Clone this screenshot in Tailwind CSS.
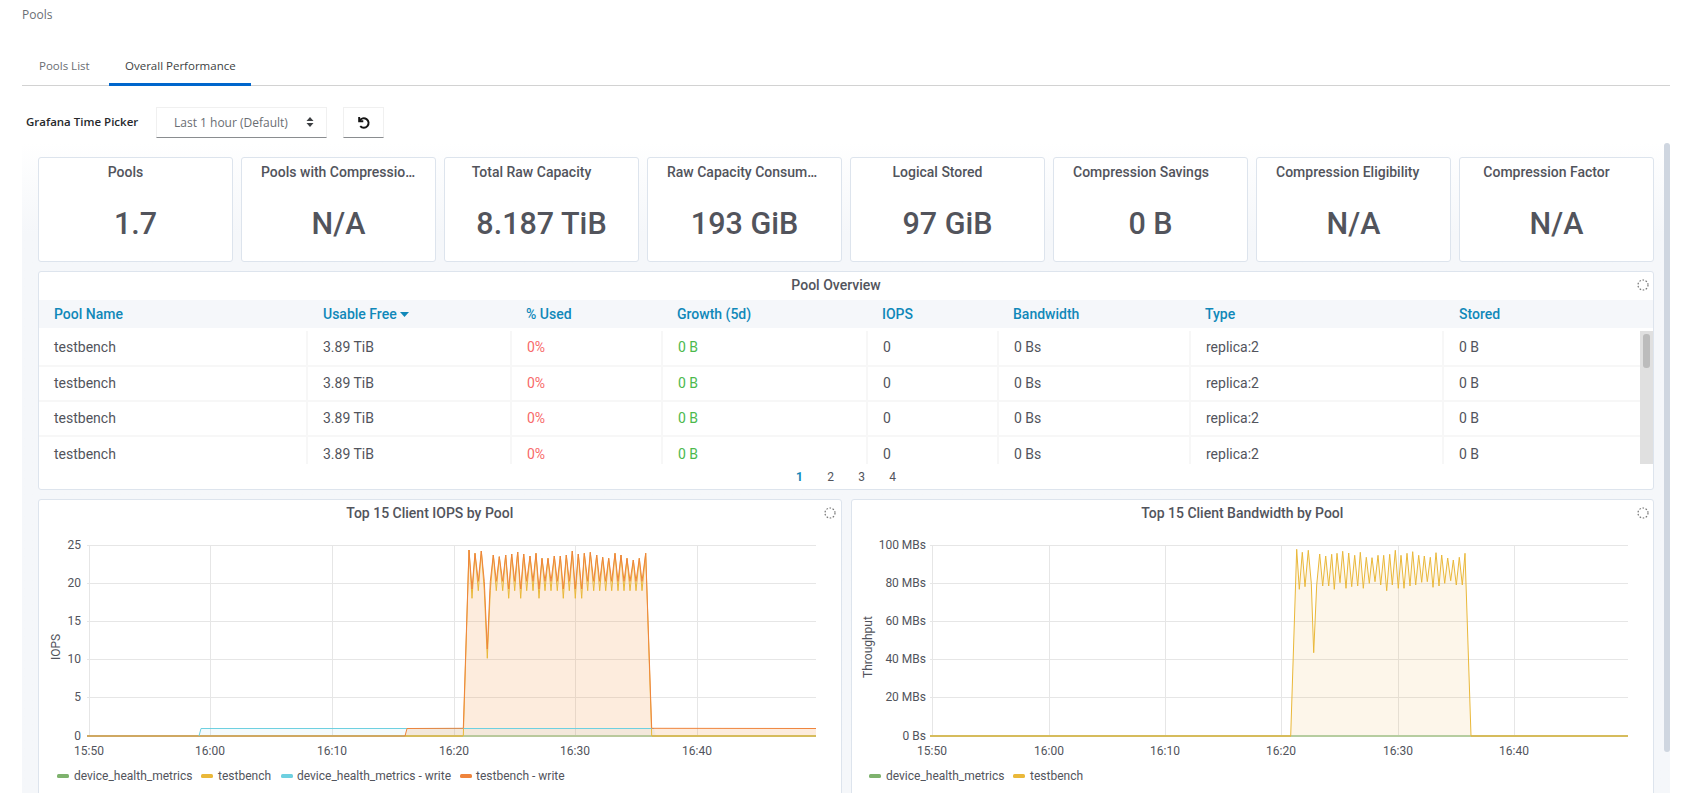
<!DOCTYPE html>
<html lang="en">
<head>
  <meta charset="UTF-8" />
  <meta name="viewport" content="width=device-width, initial-scale=1" />
  <title>Pools</title>
  <script src="https://cdn.jsdelivr.net/npm/@tailwindcss/browser@4"></script>
</head>
<body class="h-[793px] overflow-hidden bg-white font-['Open_Sans',sans-serif] text-xs">
  <main class="pl-[22px] pr-[24px]">
    <p class="h-[30px] leading-[30px] text-[#6a6e73]">Pools</p>

    <!-- tabs -->
    <div class="mt-[26px] flex h-[30px] items-start border-b border-[#d2d2d2] text-[11.5px]">
      <a class="h-[30px] w-[87px] pl-[17px] leading-[20px] text-[#6a6e73]">Pools List</a>
      <a class="h-[30px] w-[142px] border-b-[3px] border-[#06c] pl-[16px] leading-[20px] text-[#3c3f42]">Overall Performance</a>
    </div>

    <!-- time picker -->
    <div class="mt-[21px] flex h-[30px] items-center pl-[4px]">
      <span class="w-[130px] text-[11.5px] font-semibold text-[#26282b]">Grafana Time Picker</span>
      <div class="flex h-[31px] w-[171px] items-center justify-between border border-[#f0f0f0] border-b-[#8a8d90] pl-[17px] pr-[12px] text-[#6a6e73]">
        <span class="pt-[2px]">Last 1 hour (Default)</span>
        <svg width="8" height="12" viewBox="0 0 8 12"><path d="M4 1L7.5 5H.5zM4 11L.5 7h7z" fill="#3c3f42"/></svg>
      </div>
      <button class="ml-[16px] flex h-[31px] w-[41px] items-center justify-center border border-[#f0f0f0] border-b-[#8a8d90]">
        <svg width="13" height="13" viewBox="0 0 12 12" fill="none" stroke="#151515" stroke-width="1.8"><path d="M2 1v3.8h3.8"/><path d="M2.4 4.4A4.4 4.4 0 1 1 3 9.4"/></svg>
      </button>
    </div>

    <!-- grafana frame -->
    <section class="relative mt-[6px] h-[650px] overflow-hidden bg-linear-to-b from-white to-[#f5f7fa] to-[14%] pl-[16px] pt-[14px] font-['Roboto',sans-serif] text-sm text-[#52545c]">
      <div class="absolute right-0 top-0 h-[609px] w-[6px] rounded-[3px] bg-[#cfd6e0]"></div>

      <div class="w-[1616px]">
        <!-- stat cards -->
        <div class="grid grid-cols-8 gap-[8px]">
          <div class="h-[105px] rounded-[3px] border border-[#dde4ed] bg-white text-center">
            <div class="truncate px-[19px] pt-[4px] leading-[20px] font-medium"><span class="pr-5">Pools</span></div>
            <div class="mt-[22px] text-[30.5px] leading-[40px] font-medium">1.7</div>
          </div>
          <div class="h-[105px] rounded-[3px] border border-[#dde4ed] bg-white text-center">
            <div class="truncate px-[19px] pt-[4px] leading-[20px] font-medium">Pools with Compression Eligibility</div>
            <div class="mt-[22px] text-[30.5px] leading-[40px] font-medium">N/A</div>
          </div>
          <div class="h-[105px] rounded-[3px] border border-[#dde4ed] bg-white text-center">
            <div class="truncate px-[19px] pt-[4px] leading-[20px] font-medium"><span class="pr-5">Total Raw Capacity</span></div>
            <div class="mt-[22px] text-[30.5px] leading-[40px] font-medium">8.187 TiB</div>
          </div>
          <div class="h-[105px] rounded-[3px] border border-[#dde4ed] bg-white text-center">
            <div class="truncate px-[19px] pt-[4px] leading-[20px] font-medium">Raw Capacity Consumed</div>
            <div class="mt-[22px] text-[30.5px] leading-[40px] font-medium">193 GiB</div>
          </div>
          <div class="h-[105px] rounded-[3px] border border-[#dde4ed] bg-white text-center">
            <div class="truncate px-[19px] pt-[4px] leading-[20px] font-medium"><span class="pr-5">Logical Stored</span></div>
            <div class="mt-[22px] text-[30.5px] leading-[40px] font-medium">97 GiB</div>
          </div>
          <div class="h-[105px] rounded-[3px] border border-[#dde4ed] bg-white text-center">
            <div class="px-[19px] pt-[4px] text-left leading-[20px] font-medium whitespace-nowrap">Compression Savings</div>
            <div class="mt-[22px] text-[30.5px] leading-[40px] font-medium">0 B</div>
          </div>
          <div class="h-[105px] rounded-[3px] border border-[#dde4ed] bg-white text-center">
            <div class="px-[19px] pt-[4px] text-left leading-[20px] font-medium whitespace-nowrap">Compression Eligibility</div>
            <div class="mt-[22px] text-[30.5px] leading-[40px] font-medium">N/A</div>
          </div>
          <div class="h-[105px] rounded-[3px] border border-[#dde4ed] bg-white text-center">
            <div class="truncate px-[19px] pt-[4px] leading-[20px] font-medium"><span class="pr-5">Compression Factor</span></div>
            <div class="mt-[22px] text-[30.5px] leading-[40px] font-medium">N/A</div>
          </div>
        </div>

        <!-- pool overview -->
        <div class="relative mt-[9px] h-[219px] rounded-[3px] border border-[#dde4ed] bg-white">
          <div class="h-[28px] pr-5 text-center leading-[27px] font-medium">Pool Overview</div>
          <svg class="absolute right-[4px] top-[7px]" width="12" height="12" viewBox="0 0 12 12" fill="none" stroke="#777" stroke-width="1.2" stroke-dasharray="1.6 1.6"><circle cx="6" cy="6" r="5"/></svg>

          <div class="grid h-[28px] grid-cols-[269px_204px_151px_205px_131px_192px_253px_1fr] items-center bg-[#f5f7fa] font-medium text-[#1088b9]">
            <div class="pl-[15px]">Pool Name</div>
            <div class="flex items-center gap-[3px] pl-[15px]">Usable Free <svg width="9" height="5" viewBox="0 0 9 5"><path d="M0 0h9L4.5 5z" fill="#1088b9"/></svg></div>
            <div class="pl-[14px]">% Used</div>
            <div class="pl-[14px]">Growth (5d)</div>
            <div class="pl-[14px]">IOPS</div>
            <div class="pl-[14px]">Bandwidth</div>
            <div class="pl-[14px]">Type</div>
            <div class="pl-[15px]">Stored</div>
          </div>

          <div class="relative mt-[3px] h-[133px] overflow-hidden">
            <div class="grid h-[36px] grid-cols-[269px_204px_151px_205px_131px_192px_253px_197px] items-stretch border-b-2 border-[#f7f7f7] leading-[32px]">
              <div class="border-r-2 border-[#f7f7f7] pl-[15px]">testbench</div>
              <div class="border-r-2 border-[#f7f7f7] pl-[15px]">3.89 TiB</div>
              <div class="border-r-2 border-[#f7f7f7] pl-[15px] text-[#f76a6a]">0%</div>
              <div class="border-r-2 border-[#f7f7f7] pl-[15px] text-[#4cb94c]">0 B</div>
              <div class="border-r-2 border-[#f7f7f7] pl-[15px]">0</div>
              <div class="border-r-2 border-[#f7f7f7] pl-[15px]">0 Bs</div>
              <div class="border-r-2 border-[#f7f7f7] pl-[15px]">replica:2</div>
              <div class="pl-[15px]">0 B</div>
            </div>
            <div class="grid h-[35px] grid-cols-[269px_204px_151px_205px_131px_192px_253px_197px] items-stretch border-b-2 border-[#f7f7f7] leading-[32px]">
              <div class="border-r-2 border-[#f7f7f7] pl-[15px]">testbench</div>
              <div class="border-r-2 border-[#f7f7f7] pl-[15px]">3.89 TiB</div>
              <div class="border-r-2 border-[#f7f7f7] pl-[15px] text-[#f76a6a]">0%</div>
              <div class="border-r-2 border-[#f7f7f7] pl-[15px] text-[#4cb94c]">0 B</div>
              <div class="border-r-2 border-[#f7f7f7] pl-[15px]">0</div>
              <div class="border-r-2 border-[#f7f7f7] pl-[15px]">0 Bs</div>
              <div class="border-r-2 border-[#f7f7f7] pl-[15px]">replica:2</div>
              <div class="pl-[15px]">0 B</div>
            </div>
            <div class="grid h-[35px] grid-cols-[269px_204px_151px_205px_131px_192px_253px_197px] items-stretch border-b-2 border-[#f7f7f7] leading-[32px]">
              <div class="border-r-2 border-[#f7f7f7] pl-[15px]">testbench</div>
              <div class="border-r-2 border-[#f7f7f7] pl-[15px]">3.89 TiB</div>
              <div class="border-r-2 border-[#f7f7f7] pl-[15px] text-[#f76a6a]">0%</div>
              <div class="border-r-2 border-[#f7f7f7] pl-[15px] text-[#4cb94c]">0 B</div>
              <div class="border-r-2 border-[#f7f7f7] pl-[15px]">0</div>
              <div class="border-r-2 border-[#f7f7f7] pl-[15px]">0 Bs</div>
              <div class="border-r-2 border-[#f7f7f7] pl-[15px]">replica:2</div>
              <div class="pl-[15px]">0 B</div>
            </div>
            <div class="grid h-[36px] grid-cols-[269px_204px_151px_205px_131px_192px_253px_197px] items-stretch leading-[34px]">
              <div class="border-r-2 border-[#f7f7f7] pl-[15px]">testbench</div>
              <div class="border-r-2 border-[#f7f7f7] pl-[15px]">3.89 TiB</div>
              <div class="border-r-2 border-[#f7f7f7] pl-[15px] text-[#f76a6a]">0%</div>
              <div class="border-r-2 border-[#f7f7f7] pl-[15px] text-[#4cb94c]">0 B</div>
              <div class="border-r-2 border-[#f7f7f7] pl-[15px]">0</div>
              <div class="border-r-2 border-[#f7f7f7] pl-[15px]">0 Bs</div>
              <div class="border-r-2 border-[#f7f7f7] pl-[15px]">replica:2</div>
              <div class="pl-[15px]">0 B</div>
            </div>
            <!-- table scrollbar -->
            <div class="absolute right-0 top-0 h-full w-[13px] bg-[#e0e0e0] px-[3px] pt-[3px]">
              <div class="h-[34px] rounded-[3px] bg-[#bcbcbc]"></div>
            </div>
          </div>

          <div class="mt-[3px] flex justify-center text-xs leading-[20px]">
            <span class="w-[31px] text-center font-bold text-[#1088b9]">1</span>
            <span class="w-[31px] text-center">2</span>
            <span class="w-[31px] text-center">3</span>
            <span class="w-[31px] text-center">4</span>
          </div>
        </div>

        <!-- charts -->
        <div class="mt-[9px] grid grid-cols-2 gap-[9px]">
          <div class="relative h-[300px] rounded-[3px] border border-[#dde4ed] bg-white">
            <div class="h-[27px] pr-5 text-center leading-[27px] font-medium">Top 15 Client IOPS by Pool</div>
            <svg class="absolute right-[5px] top-[7px]" width="12" height="12" viewBox="0 0 12 12" fill="none" stroke="#777" stroke-width="1.2" stroke-dasharray="1.6 1.6"><circle cx="6" cy="6" r="5"/></svg>
            <svg class="block" width="802" height="270" viewBox="39 527 802 270" font-size="12" fill="#52545c">
              <path d="M87 545.5H816M87 583.5H816M87 621.5H816M87 659.5H816M87 697.5H816M89.5 545V736M210.5 545V736M332.5 545V736M454.5 545V736M575.5 545V736M697.5 545V736" stroke="#e6e6e6" fill="none"/>
              <g text-anchor="end">
                <text x="81" y="549">25</text><text x="81" y="587">20</text><text x="81" y="625">15</text><text x="81" y="663">10</text><text x="81" y="701">5</text><text x="81" y="740">0</text>
              </g>
              <g text-anchor="middle">
                <text x="89" y="755">15:50</text><text x="210" y="755">16:00</text><text x="332" y="755">16:10</text><text x="454" y="755">16:20</text><text x="575" y="755">16:30</text><text x="697" y="755">16:40</text>
                <text transform="translate(60 647) rotate(-90)">IOPS</text>
              </g>
              <path d="M201 728H654L656 736H199z" fill="#6ed0e0" fill-opacity=".08"/>
              <path id="ioFillW" fill="#f08a2c" fill-opacity=".16"/>
              <path d="M87 736H405" stroke="#cfa862" stroke-width="2" fill="none"/>
              <path d="M405 736H463" stroke="#d6bc5c" stroke-width="2" fill="none"/>
              <path d="M463 736H652" stroke="#b9c99c" stroke-width="2" fill="none"/>
              <path d="M652 736H816" stroke="#d6bc5c" stroke-width="2" fill="none"/>
              <path id="ioLineR" stroke="#eab839" fill="none"/>
              <path d="M199 736L201 728.5H654" stroke="#6ed0e0" fill="none"/>
              <path id="ioLineW" stroke="#ef843c" fill="none"/>
              <rect x="57" y="774" width="12" height="4" rx="1.5" fill="#7eb26d"/><text x="74" y="780">device_health_metrics</text>
              <rect x="201" y="774" width="12" height="4" rx="1.5" fill="#eab839"/><text x="218" y="780">testbench</text>
              <rect x="281" y="774" width="12" height="4" rx="1.5" fill="#6ed0e0"/><text x="297" y="780">device_health_metrics - write</text>
              <rect x="460" y="774" width="12" height="4" rx="1.5" fill="#ef843c"/><text x="476" y="780">testbench - write</text>
            </svg>
          </div>

          <div class="relative h-[300px] rounded-[3px] border border-[#dde4ed] bg-white">
            <div class="h-[27px] pr-5 text-center leading-[27px] font-medium">Top 15 Client Bandwidth by Pool</div>
            <svg class="absolute right-[4px] top-[7px]" width="12" height="12" viewBox="0 0 12 12" fill="none" stroke="#777" stroke-width="1.2" stroke-dasharray="1.6 1.6"><circle cx="6" cy="6" r="5"/></svg>
            <svg class="block" width="802" height="270" viewBox="852 527 802 270" font-size="12" fill="#52545c">
              <path d="M930 545.5H1628M930 583.5H1628M930 621.5H1628M930 659.5H1628M930 697.5H1628M932.5 545V736M1049.5 545V736M1165.5 545V736M1281.5 545V736M1398.5 545V736M1514.5 545V736" stroke="#e6e6e6" fill="none"/>
              <g text-anchor="end">
                <text x="926" y="549">100 MBs</text><text x="926" y="587">80 MBs</text><text x="926" y="625">60 MBs</text><text x="926" y="663">40 MBs</text><text x="926" y="701">20 MBs</text><text x="926" y="740">0 Bs</text>
              </g>
              <g text-anchor="middle">
                <text x="932" y="755">15:50</text><text x="1049" y="755">16:00</text><text x="1165" y="755">16:10</text><text x="1281" y="755">16:20</text><text x="1398" y="755">16:30</text><text x="1514" y="755">16:40</text>
                <text transform="translate(872 647) rotate(-90)">Throughput</text>
              </g>
              <path id="bwFill" fill="#f0a830" fill-opacity=".1"/>
              <path d="M930 736H1291" stroke="#d6bc5c" stroke-width="2" fill="none"/>
              <path d="M1291 736H1471" stroke="#b6cda0" stroke-width="2" fill="none"/>
              <path d="M1471 736H1628" stroke="#d6bc5c" stroke-width="2" fill="none"/>
              <path id="bwLine" stroke="#eab839" fill="none"/>
              <rect x="869" y="774" width="12" height="4" rx="1.5" fill="#7eb26d"/><text x="886" y="780">device_health_metrics</text>
              <rect x="1013" y="774" width="12" height="4" rx="1.5" fill="#eab839"/><text x="1030" y="780">testbench</text>
            </svg>
          </div>
        </div>
      </div>
    </section>
  </main>

  <script>
    // traced sample points: x, y pairs in 3x crop coordinates
    const iops = [100,648,117,90,126,235,135,100,145,212,154,93,163,212,172,415,181,212,190,105,199,212,208,110,218,212,227,105,236,235,245,102,254,212,263,96,272,235,281,102,290,212,300,108,309,212,318,100,327,235,336,115,345,212,354,115,363,212,373,108,382,212,391,108,400,235,409,105,418,212,427,93,436,235,445,102,455,235,463,100,473,212,481,97,491,212,500,105,509,212,518,112,527,212,536,115,545,212,555,100,564,212,573,105,582,212,591,115,600,212,610,120,618,212,628,115,636,212,647,100,665,648];
    const bw = [62,648,80,88,88,208,97,97,105,200,115,91,124,190,131,398,140,195,149,102,158,198,167,108,176,198,185,103,193,208,201,100,210,188,218,94,228,205,236,99,245,200,254,106,263,198,271,97,280,205,289,112,298,190,306,113,315,185,324,106,332,195,341,106,350,212,359,103,367,195,376,91,385,205,393,106,402,205,411,100,420,198,428,95,437,195,446,106,455,187,463,108,472,185,481,112,489,202,498,98,507,198,515,105,524,190,533,114,542,182,550,120,559,195,568,112,577,195,585,100,603,648];

    function toPoints(data, originX, shift) {
      const pts = [];
      for (let i = 0; i < data.length; i += 2) {
        let y = data[i + 1];
        if (shift && y === 648) y = 625;
        else if (shift && y > 150) y -= 28;
        pts.push((originX + data[i] / 3).toFixed(1) + ' ' + (520 + y / 3).toFixed(1));
      }
      return pts;
    }

    function setPath(id, pts, prefix, suffix) {
      document.getElementById(id).setAttribute('d', prefix + pts.join('L') + suffix);
    }

    const read = toPoints(iops, 430, false);
    const write = toPoints(iops, 430, true);
    setPath('ioLineR', read, 'M', '');
    setPath('ioLineW', write, 'M405 736L407 728.5L', 'L816 728.5');
    setPath('ioFillW', write, 'M405 736L407 728.5L', 'L816 728.5V736z');

    const through = toPoints(bw, 1270, false);
    setPath('bwLine', through, 'M', '');
    setPath('bwFill', through, 'M', 'z');
  </script>
</body>
</html>
